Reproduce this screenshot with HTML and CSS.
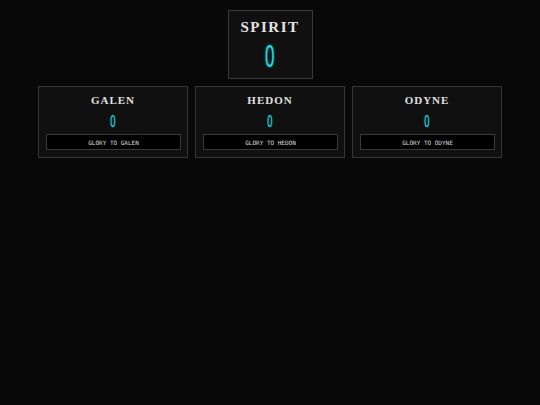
FILE: index.html
```html
<!DOCTYPE html>
<html>
<head>
    <title>Spirit</title>
    <link rel="stylesheet" href="styles.css">
</head>
<body>
    <div id="app">
        <div class="spirit-box">
            <h1 class="spirit-title">Spirit</h1>
            <div class="spirit-value"><span class="digit">0</span></div>
        </div>
        <div class="gods">
            <div class="god-card">
                <h2 class="god-name">Galen</h2>
                <div class="god-value"><span class="digit">0</span></div>
                <button class="glory-button">Glory to Galen</button>
            </div>
            <div class="god-card">
                <h2 class="god-name">Hedon</h2>
                <div class="god-value"><span class="digit">0</span></div>
                <button class="glory-button">Glory to Hedon</button>
            </div>
            <div class="god-card">
                <h2 class="god-name">Odyne</h2>
                <div class="god-value"><span class="digit">0</span></div>
                <button class="glory-button">Glory to Odyne</button>
            </div>
        </div>
    </div>
</body>
</html>
```

FILE: styles.css
```css
html, body {
    background-color: #080808;
}
body {
    margin: 0;
    padding: 10px 0;
    color: #ddd;
    font-family: "Liberation Serif", serif;
}
#app {
    display: flex;
    flex-direction: column;
    align-items: center;
    gap: 7px;
}
.spirit-box {
    width: 85px;
    height: 69px;
    box-sizing: border-box;
    border: 1px solid #3a3a3a;
    background-color: #101010;
    text-align: center;
    padding-top: 8px;
}
.spirit-title {
    margin: 0;
    font-size: 15px;
    line-height: 17px;
    font-weight: bold;
    letter-spacing: 1.5px;
    text-transform: uppercase;
    color: #e4e4e4;
}
.spirit-value {
    margin-top: 7px;
    font-family: "Liberation Sans", sans-serif;
    font-size: 31px;
    line-height: 28px;
    color: #22d8e0;
    text-shadow: 0 0 3px rgba(34, 216, 224, 0.6);
}
.digit {
    display: inline-block;
    transform: scaleX(0.55);
}
.gods {
    display: flex;
    gap: 7px;
}
.god-card {
    width: 150px;
    height: 72px;
    box-sizing: border-box;
    border: 1px solid #363636;
    background-color: #101010;
    padding: 7px 7px 0;
    text-align: center;
}
.god-name {
    margin: 0;
    font-size: 11px;
    line-height: 13px;
    font-weight: bold;
    letter-spacing: 1px;
    text-transform: uppercase;
    color: #e0e0e0;
}
.god-value {
    margin-top: 7px;
    font-family: "Liberation Sans", sans-serif;
    font-size: 17px;
    line-height: 16px;
    color: #22d8e0;
    text-shadow: 0 0 2px rgba(34, 216, 224, 0.6);
}
.glory-button {
    display: block;
    width: 135px;
    height: 16px;
    margin-top: 4px;
    padding: 0;
    background-color: #000;
    border: 1px solid #3a3a3a;
    color: #dcdcdc;
    font-family: "DejaVu Sans Mono", monospace;
    font-size: 6px;
    text-transform: uppercase;
    cursor: pointer;
}
```
